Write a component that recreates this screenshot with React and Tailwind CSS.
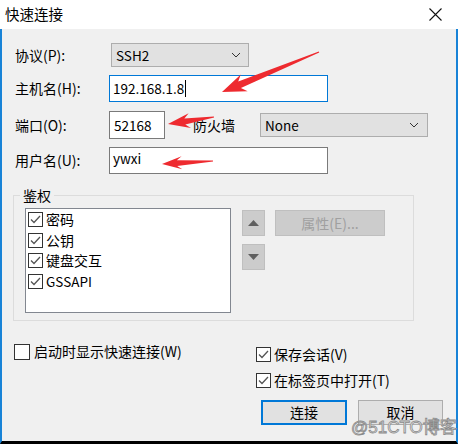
import React from "react";

const F = "font-['Microsoft_YaHei','Noto_Sans_CJK_SC',sans-serif]";

function Check({ checked = true, size = 15 }) {
  return (
    <div
      className="shrink-0 border border-[#333333] bg-white flex items-center justify-center"
      style={{ width: size, height: size }}
    >
      {checked && (
        <svg width="11" height="9" viewBox="0 0 11 9">
          <polyline points="1,4.5 4,7.5 10,1" fill="none" stroke="#555555" strokeWidth="1.3" />
        </svg>
      )}
    </div>
  );
}

function Chevron() {
  return (
    <svg width="10" height="6" viewBox="0 0 10 6">
      <polyline points="1,1 5,5 9,1" fill="none" stroke="#333333" strokeWidth="1" />
    </svg>
  );
}

function Arrow({ tip, tail, head = 22, hw = 8, sw = 3.5 }) {
  const dx = tail[0] - tip[0];
  const dy = tail[1] - tip[1];
  const len = Math.hypot(dx, dy);
  const ux = dx / len, uy = dy / len;
  const nx = -uy, ny = ux;
  const bx = tip[0] + ux * head, by = tip[1] + uy * head;
  const bbx = tip[0] + ux * (head - 5), bby = tip[1] + uy * (head - 5);
  const pts = [
    [tip[0], tip[1]],
    [bx + nx * hw, by + ny * hw],
    [bbx + nx * sw, bby + ny * sw],
    [tail[0] + nx * 0.6, tail[1] + ny * 0.6],
    [tail[0] - nx * 0.6, tail[1] - ny * 0.6],
    [bbx - nx * sw, bby - ny * sw],
    [bx - nx * hw, by - ny * hw],
  ];
  return <polygon points={pts.map((p) => p.join(",")).join(" ")} fill="#ee2a2f" />;
}

export default function App() {
  return (
    <div className={`${F} relative w-[458px] h-[444px] bg-[#f0f0f0] text-black text-[14px] overflow-hidden flex flex-col`}>
      {/* title bar */}
      <div className="h-[29px] bg-white flex items-center justify-between pl-[5px] pr-[16px] shrink-0">
        <span className="text-[14.5px] leading-none">快速连接</span>
        <svg width="13" height="13" viewBox="0 0 13 13">
          <path d="M0.5 0.5 L12.5 12.5 M12.5 0.5 L0.5 12.5" stroke="#111" strokeWidth="1.1" />
        </svg>
      </div>

      {/* body */}
      <div className="flex-1 flex border-l-[2px] border-[#1883d7] border-r-[2px] border-b-[3px] border-b-black">
        <div className="flex-1 flex flex-col pl-[12px]">
          {/* protocol */}
          <div className="flex items-center mt-[14px] h-[24px]">
            <span className="w-[97px] pl-[1px]">协议(P):</span>
            <div className="w-[138px] h-[24px] bg-[#e1e1e1] border border-[#adadad] flex items-center justify-between pl-[4px] pr-[7px]">
              <span className="text-[13.5px]">SSH2</span>
              <Chevron />
            </div>
          </div>
          {/* host */}
          <div className="flex items-center mt-[8px] h-[27px]">
            <span className="w-[95px] pl-[1px]">主机名(H):</span>
            <div className="w-[219px] h-[27px] bg-white border border-[#0078d7] flex items-center pl-[3px]">
              <span className="text-[13.5px]">192.168.1.8</span>
              <span className="w-px h-[17px] bg-black ml-[1px]" />
            </div>
          </div>
          {/* port */}
          <div className="flex items-center mt-[9px] h-[28px]">
            <span className="w-[95px] pl-[1px]">端口(O):</span>
            <div className="w-[56px] h-[28px] bg-white border border-[#7a7a7a] flex items-center pl-[4px]">
              <span className="text-[13.5px]">52168</span>
            </div>
            <span className="ml-[28px] w-[67px]">防火墙</span>
            <div className="w-[168px] h-[24px] bg-[#e1e1e1] border border-[#adadad] flex items-center justify-between pl-[4px] pr-[8px]">
              <span className="text-[13.5px]">None</span>
              <Chevron />
            </div>
          </div>
          {/* user */}
          <div className="flex items-center mt-[8px] h-[27px]">
            <span className="w-[95px] pl-[1px]">用户名(U):</span>
            <div className="w-[219px] h-[27px] bg-white border border-[#7a7a7a] flex items-center pl-[3px]">
              <span className="text-[13.5px] pb-[4px]">ywxi</span>
            </div>
          </div>

          {/* auth group */}
          <div className="relative mt-[21px] ml-[-1px] w-[401px] h-[126px] border border-[#dcdcdc] flex items-start pl-[11px] pt-[12px]">
            <span className="absolute left-[6px] top-[-11px] px-[3px] bg-[#f0f0f0] leading-[20px]">鉴权</span>
            <div className="w-[206px] h-[105px] bg-white border border-[#828790] flex flex-col pl-[2px]">
              {["密码", "公钥", "键盘交互", "GSSAPI"].map((t) => (
                <div key={t} className="flex items-center h-[20.7px] gap-[3px]">
                  <Check />
                  <span className={t === "GSSAPI" ? "text-[13.5px]" : ""}>{t}</span>
                </div>
              ))}
            </div>
            <div className="flex flex-col ml-[11px] mt-[2px] gap-[8px]">
              <div className="w-[23px] h-[26px] bg-[#cccccc] border border-[#bfbfbf] flex items-center justify-center">
                <svg width="11" height="6" viewBox="0 0 11 6"><polygon points="5.5,0 11,6 0,6" fill="#606060" /></svg>
              </div>
              <div className="w-[23px] h-[26px] bg-[#cccccc] border border-[#bfbfbf] flex items-center justify-center">
                <svg width="11" height="6" viewBox="0 0 11 6"><polygon points="0,0 11,0 5.5,6" fill="#606060" /></svg>
              </div>
            </div>
            <div className="ml-[10px] mt-[2px] w-[110px] h-[26px] bg-[#cccccc] border border-[#bfbfbf] flex items-center justify-center text-[#a0a0a0]">
              属性(E)...
            </div>
          </div>

          {/* bottom */}
          <div className="flex mt-[22px]">
            <div className="w-[242px] flex items-center gap-[4px] h-[17px]">
              <Check checked={false} size={16} />
              <span>启动时显示快速连接(W)</span>
            </div>
            <div className="flex flex-col gap-[10px] mt-[3px]">
              <div className="flex items-center gap-[3px] h-[16px]">
                <Check />
                <span>保存会话(V)</span>
              </div>
              <div className="flex items-center gap-[3px] h-[16px]">
                <Check />
                <span>在标签页中打开(T)</span>
              </div>
            </div>
          </div>
          <div className="flex mt-[12px] ml-[247px] gap-[11px]">
            <div className="w-[86px] h-[25px] bg-[#e1e1e1] border-[2px] border-[#0078d7] flex items-center justify-center">连接</div>
            <div className="w-[85px] h-[25px] bg-[#e1e1e1] border border-[#adadad] flex items-center justify-center">取消</div>
          </div>
        </div>
      </div>

      {/* annotation arrows */}
      <svg className="absolute left-0 top-0 pointer-events-none" width="458" height="444">
        <Arrow tip={[222, 92]} tail={[319, 52]} head={24} hw={9} sw={3.5} />
        <Arrow tip={[168, 124]} tail={[214, 117]} head={22} hw={7.5} sw={3} />
        <Arrow tip={[162, 164]} tail={[213, 161]} head={20} hw={6.5} sw={2.8} />
      </svg>

      {/* watermark */}
      <span
        className="absolute left-[351px] top-[419px] text-[17px] leading-none font-['Liberation_Sans','Noto_Sans_CJK_SC',sans-serif] text-[#eeeeee] pointer-events-none"
        style={{ WebkitTextStroke: "0.8px #8a8a8a" }}
      >
        @51CTO博客
      </span>
    </div>
  );
}
